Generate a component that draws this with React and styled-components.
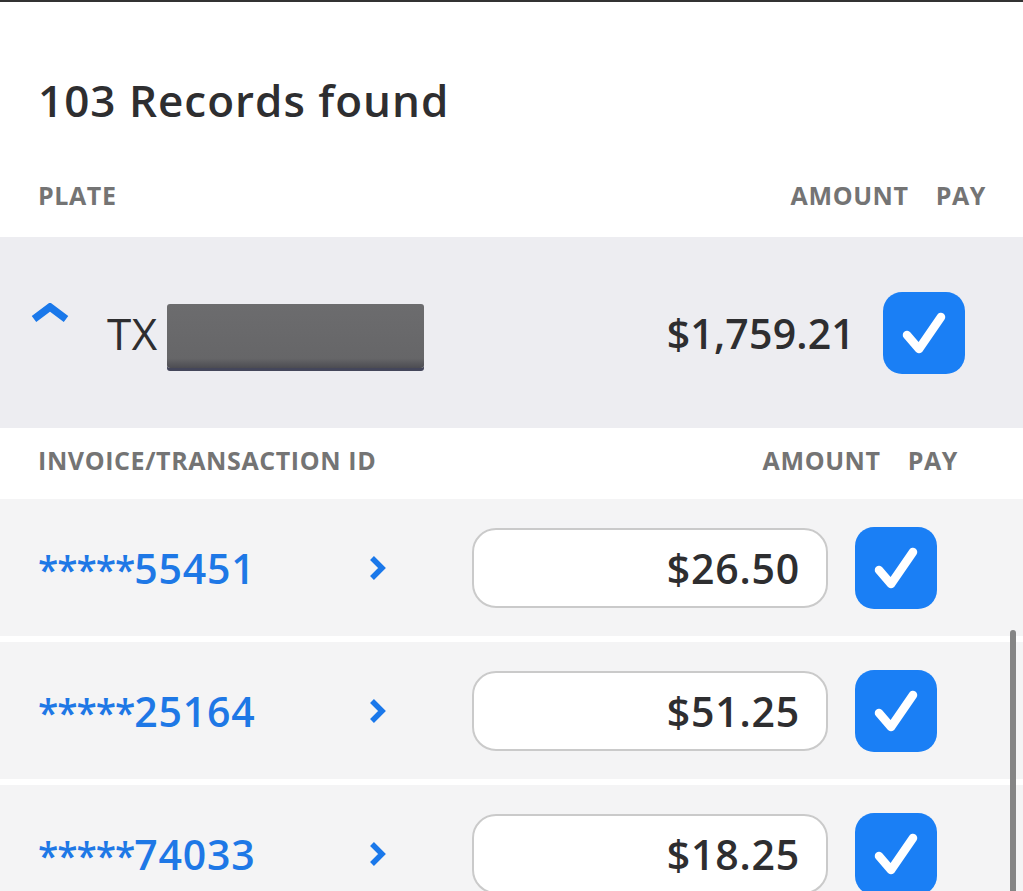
import React from "react";
import styled, { createGlobalStyle } from "styled-components";

const GlobalStyle = createGlobalStyle`
  html, body {
    margin: 0;
    padding: 0;
    background: #ffffff;
  }
  body {
    font-family: "Open Sans", "Noto Sans", sans-serif;
    color: #2f2f31;
  }
`;

const Screen = styled.div`
  position: relative;
  width: 1023px;
  height: 891px;
  overflow: hidden;
  border-top: 2px solid #333;
  box-sizing: border-box;
  background: #fff;
`;

const Title = styled.h1`
  margin: 0;
  padding: 76px 0 0 38px;
  height: 74px;
  font-size: 44px;
  font-weight: 600;
  letter-spacing: 1px;
  color: #2e2e30;
  line-height: 1;
`;

const HeaderRow = styled.div`
  display: flex;
  align-items: center;
  box-sizing: border-box;
  height: ${(p) => p.h}px;
  padding: 0 ${(p) => p.right}px ${(p) => p.bottom}px 38px;
  font-size: 25px;
  font-weight: 700;
  color: #747474;
  letter-spacing: 0.6px;
`;

const HeaderLabel = styled.span`
  flex: 1;
`;

const PayLabel = styled.span`
  margin-left: 27px;
`;

const PlateRow = styled.div`
  display: flex;
  align-items: center;
  height: 191px;
  background: #ededf1;
  padding: 0 58px 0 30px;
  box-sizing: border-box;
`;

const Toggle = styled.button`
  border: 0;
  background: none;
  padding: 0;
  width: 40px;
  height: 20px;
  align-self: flex-start;
  margin-top: 66px;
  cursor: pointer;
  svg {
    display: block;
  }
`;

const PlateText = styled.span`
  margin-left: 37px;
  font-size: 44px;
  font-weight: 500;
  color: #2e2e30;
  letter-spacing: 0.5px;
`;

const Redacted = styled.span`
  display: inline-block;
  width: 257px;
  height: 64px;
  margin-left: 9px;
  margin-top: 6px;
  border-radius: 3px;
  background: linear-gradient(180deg, #6c6c6e 0%, #666668 85%, #4c4c52 100%);
  box-shadow: 0 3px 0 #44465a;
`;

const Spacer = styled.div`
  flex: 1;
`;

const PlateAmount = styled.span`
  font-size: 41px;
  font-weight: 600;
  color: #2e2e30;
  letter-spacing: 0.2px;
  margin-right: 28px;
`;

const CheckBox = styled.span`
  display: flex;
  align-items: center;
  justify-content: center;
  width: 82px;
  height: 82px;
  border-radius: 19px;
  background: #1a7ff5;
  flex-shrink: 0;
`;

const List = styled.div`
  display: flex;
  flex-direction: column;
  gap: 6px;
`;

const InvoiceRow = styled.div`
  display: flex;
  align-items: center;
  height: 137px;
  background: #f4f4f5;
  padding: 0 86px 0 38px;
`;

const InvoiceId = styled.a`
  width: 330px;
  font-size: 41px;
  font-weight: 600;
  color: #1e78e6;
  text-decoration: none;
  letter-spacing: 0.8px;
`;

const Stars = styled.span`
  font-size: 37px;
  letter-spacing: -1px;
`;

const Arrow = styled.span`
  width: 105px;
  svg {
    display: block;
  }
`;

const AmountInput = styled.div`
  width: 356px;
  height: 80px;
  box-sizing: border-box;
  border: 2px solid #cacaca;
  border-radius: 24px;
  background: #fff;
  display: flex;
  align-items: center;
  justify-content: flex-end;
  padding-right: 26px;
  font-size: 41px;
  font-weight: 600;
  letter-spacing: 0.8px;
  color: #2e2e30;
  margin-right: 27px;
`;

const ScrollThumb = styled.div`
  position: absolute;
  right: 7px;
  top: 628px;
  bottom: 0;
  width: 6px;
  border-radius: 3px 3px 0 0;
  background: #858585;
`;

const Check = () => (
  <svg width="52" height="52" viewBox="0 0 52 52">
    <path
      d="M9 28 L21 42 L43 10"
      fill="none"
      stroke="#fff"
      strokeWidth="8.5"
      strokeLinecap="round"
      strokeLinejoin="round"
    />
  </svg>
);

const ChevronUp = () => (
  <svg width="40" height="20" viewBox="0 0 40 20">
    <path d="M4 16 L20 4 L36 16" fill="none" stroke="#1a78ea" strokeWidth="7.5" strokeLinejoin="miter" />
  </svg>
);

const ChevronRight = () => (
  <svg width="18" height="26" viewBox="0 0 18 26">
    <path d="M4 3 L14 13 L4 23" fill="none" stroke="#1a78ea" strokeWidth="5.5" strokeLinejoin="miter" />
  </svg>
);

const invoices = [
  { id: "55451", amount: "$26.50" },
  { id: "25164", amount: "$51.25" },
  { id: "74033", amount: "$18.25" },
];

export default function App() {
  return (
    <Screen>
      <GlobalStyle />
      <Title>103 Records found</Title>
      <HeaderRow h={85} right={37} bottom={0}>
        <HeaderLabel>PLATE</HeaderLabel>
        <span>AMOUNT</span>
        <PayLabel>PAY</PayLabel>
      </HeaderRow>
      <PlateRow>
        <Toggle aria-label="Collapse">
          <ChevronUp />
        </Toggle>
        <PlateText>TX</PlateText>
        <Redacted />
        <Spacer />
        <PlateAmount>$1,759.21</PlateAmount>
        <CheckBox>
          <Check />
        </CheckBox>
      </PlateRow>
      <HeaderRow h={71} right={65} bottom={8}>
        <HeaderLabel>INVOICE/TRANSACTION ID</HeaderLabel>
        <span>AMOUNT</span>
        <PayLabel>PAY</PayLabel>
      </HeaderRow>
      <List>
        {invoices.map((inv) => (
          <InvoiceRow key={inv.id}>
            <InvoiceId href="#">
              <Stars>*****</Stars>
              {inv.id}
            </InvoiceId>
            <Arrow>
              <ChevronRight />
            </Arrow>
            <AmountInput>{inv.amount}</AmountInput>
            <CheckBox>
              <Check />
            </CheckBox>
          </InvoiceRow>
        ))}
      </List>
      <ScrollThumb />
    </Screen>
  );
}
